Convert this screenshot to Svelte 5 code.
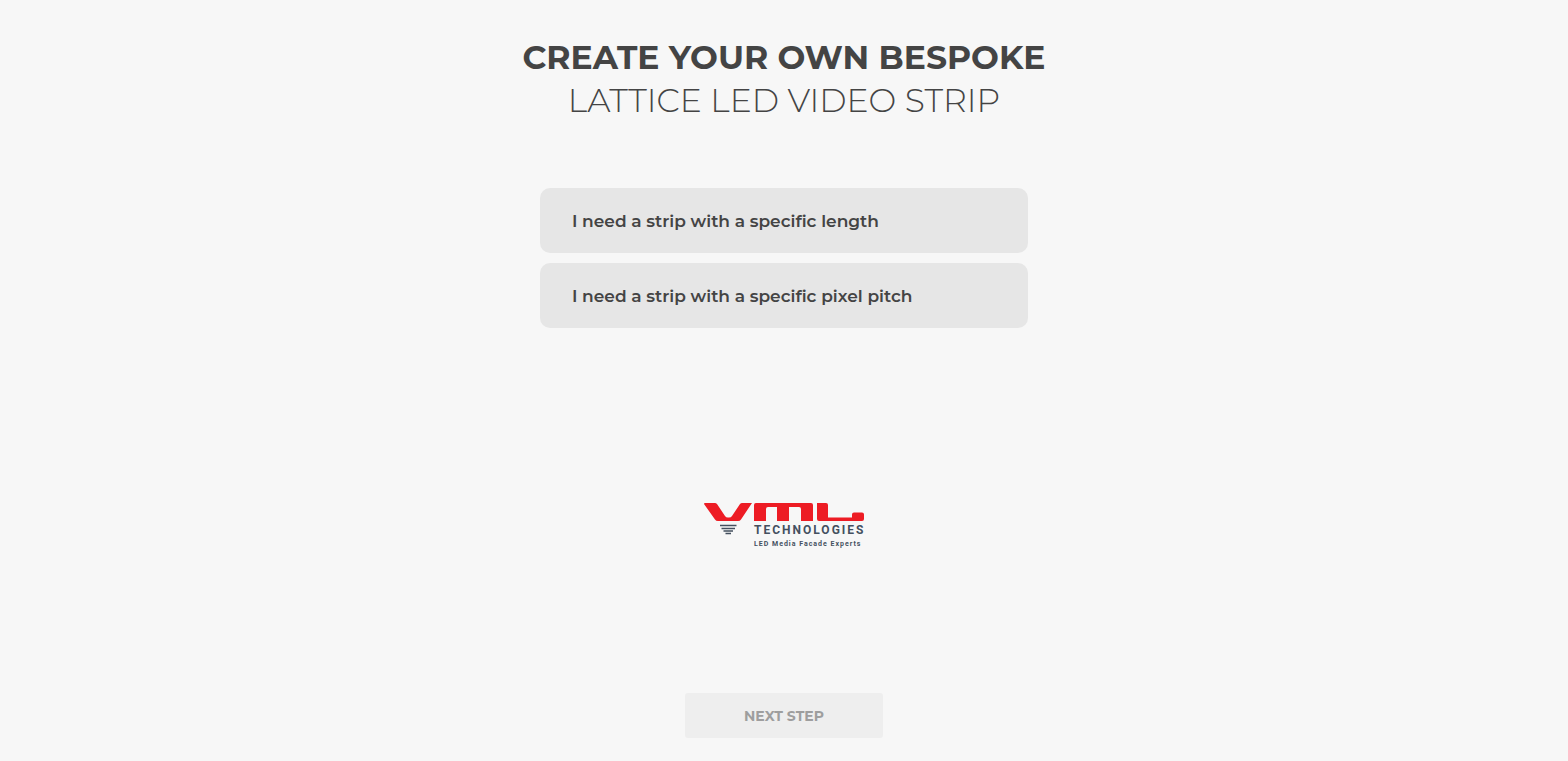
<script lang="ts">
  interface Option {
    value: string;
    label: string;
  }

  const options: Option[] = [
    { value: 'length', label: 'I need a strip with a specific length' },
    { value: 'pitch', label: 'I need a strip with a specific pixel pitch' },
  ];

  let selected = $state('');
</script>

<main class="configurator">
  <h1 class="title">
    <strong>CREATE YOUR OWN BESPOKE</strong>
    <span>LATTICE LED VIDEO STRIP</span>
  </h1>

  <div class="options">
    {#each options as option}
      <button
        class="option"
        class:selected={selected === option.value}
        aria-pressed={selected === option.value}
        onclick={() => (selected = option.value)}
      >
        {option.label}
      </button>
    {/each}
  </div>

  <svg class="logo" width="160" height="46" viewBox="0 0 160 46" role="img" aria-label="VML Technologies">
    <g fill="#ed1c24">
      <path d="M0.500 0H11Q12 0 13 1L21 13Q22 14.500 24 14.500H25Q27 14.500 28 13L36 1Q37 0 38 0H48L37 16.500Q36 18 34 18H14Q12 18 11 16.500L0 1Z" />
      <path d="M52 0H107Q109 0 109 2V18H97V6Q97 4 95 4H85V18H73V4H64Q62 4 62 6V18H50V2Q50 0 52 0Z" />
      <path d="M113 0H122Q124 0 124 2V14.500H148V11.500Q148 9.500 150 9.500H158Q160 9.500 160 11.500V16Q160 18 158 18H115Q113 18 113 16Z" />
    </g>
    <path d="M16 22.500H32.500M17.500 25.500H31M19.500 28H29M21.500 30.500H27" stroke="#44505f" stroke-width="1.600" fill="none" />
    <text class="logo-name" x="50" y="31" letter-spacing="2">TECHNOLOGIES</text>
    <text class="logo-tagline" x="50" y="43" letter-spacing="1">LED Media Facade Experts</text>
  </svg>

  <button class="next" disabled={!selected}>NEXT STEP</button>
</main>

<style>
  :global(body) {
    margin: 0;
    background: #f7f7f7;
  }

  .configurator {
    box-sizing: border-box;
    min-height: 100vh;
    padding: 36px 24px 23px;
    display: flex;
    flex-direction: column;
    align-items: center;
    font-family: Montserrat, Inter, sans-serif;
    color: #444;
  }

  .title {
    margin: 0 0 66px;
    font-size: 33px;
    line-height: 43px;
    font-weight: 300;
    text-align: center;
  }

  .title strong,
  .title span {
    display: block;
  }

  .title strong {
    font-weight: 700;
  }

  .options {
    width: 100%;
    max-width: 488px;
    margin-bottom: 30px;
    display: flex;
    flex-direction: column;
    gap: 10px;
  }

  .option {
    padding: 21px 32px 20px;
    border: none;
    border-radius: 10px;
    background: #e6e6e6;
    color: inherit;
    font: inherit;
    font-size: 17px;
    line-height: 24px;
    font-weight: 600;
    font-variant-ligatures: none;
    text-align: left;
    cursor: pointer;
  }

  .option.selected {
    background: #d4d4d4;
  }

  .logo {
    display: block;
    margin: auto 0;
  }

  .logo-name,
  .logo-tagline {
    fill: #44505f;
    font-family: Roboto, sans-serif;
  }

  .logo-name {
    font-size: 12px;
    font-weight: 700;
  }

  .logo-tagline {
    font-size: 7px;
    font-weight: 700;
  }

  .next {
    width: 198px;
    padding: 12px 16px 11px;
    border: none;
    border-radius: 3px;
    background: #eee;
    color: #9e9e9e;
    font: inherit;
    font-size: 14px;
    line-height: 22px;
    font-weight: 700;
  }

  .next:enabled {
    background: #444;
    color: #fff;
    cursor: pointer;
  }
</style>
